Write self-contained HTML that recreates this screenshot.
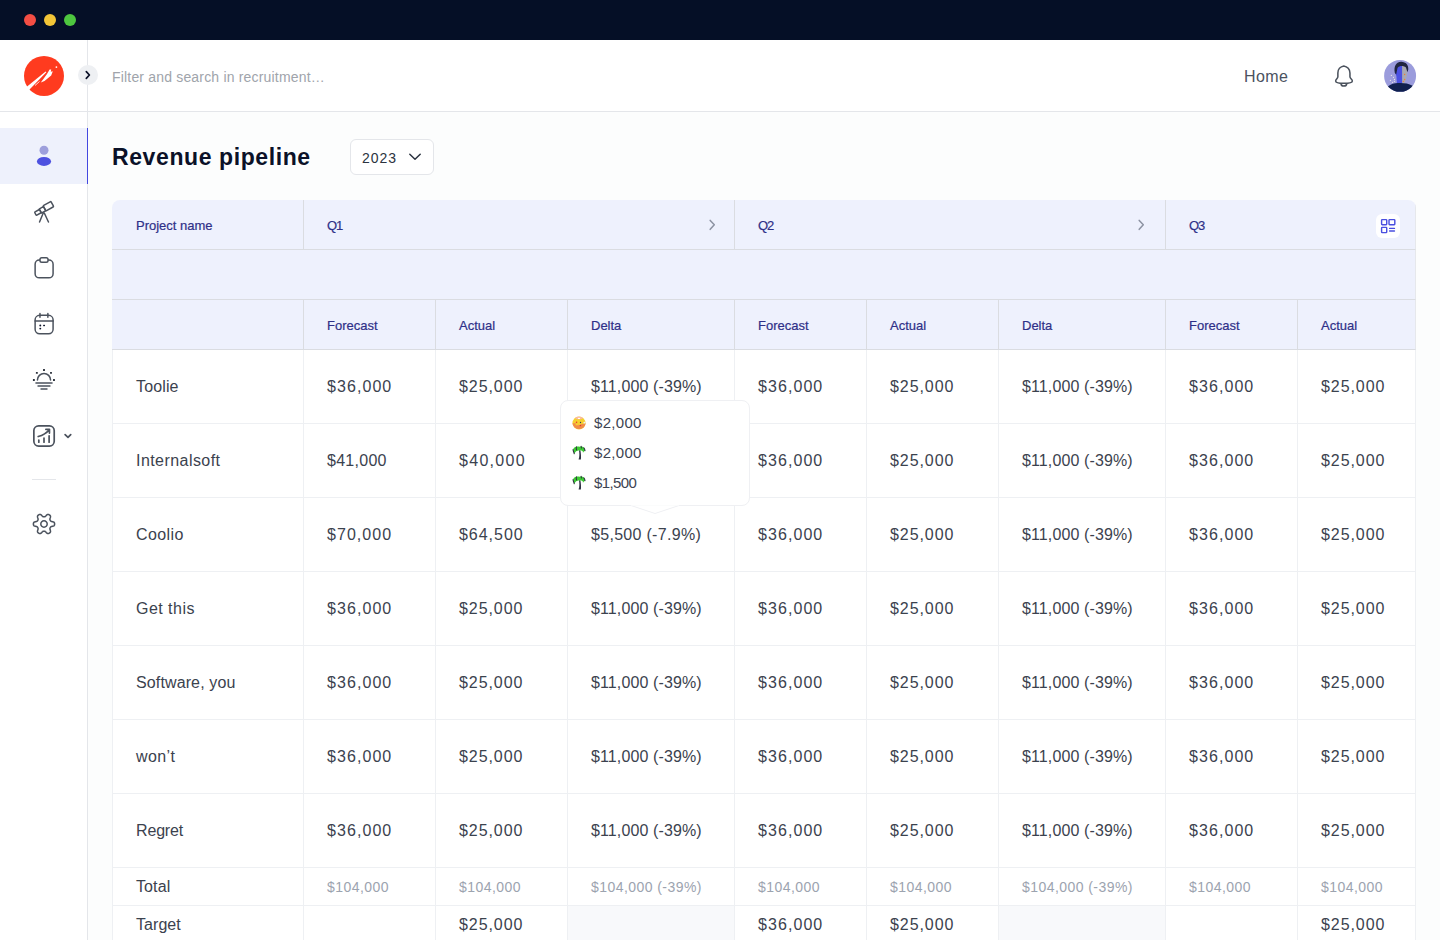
<!DOCTYPE html>
<html><head><meta charset="utf-8">
<style>
*{box-sizing:border-box;margin:0;padding:0}
html,body{width:1440px;height:940px;overflow:hidden;background:#fcfdfd;font-family:"Liberation Sans",sans-serif;position:relative}
.abs{position:absolute}
svg{position:absolute;overflow:visible}
#titlebar{left:0;top:0;width:1440px;height:40px;background:#050f26}
.dot{position:absolute;top:14px;width:12px;height:12px;border-radius:50%}
#header{left:0;top:40px;width:1440px;height:72px;background:#fff;border-bottom:1px solid #e4e6ea}
#sidebar{left:0;top:112px;width:88px;height:828px;background:#fff;border-right:1px solid #e4e6ea}
#vline{left:87px;top:40px;width:1px;height:72px;background:#e4e6ea}
#table{left:112px;top:200px;width:1304px;height:740px;overflow:hidden;border-radius:8px 8px 0 0}
.c{position:absolute;display:flex;align-items:center;padding-left:23px;white-space:nowrap}
.h{background:#eef1fd;color:#2f3088;font-size:13px;border-right:1px solid #dadce1;border-bottom:1px solid #dadce1;padding-top:2px;-webkit-text-stroke:0.2px #2f3088}
.l{border-left:1px solid #eef0f3}
.h.l{border-left:0;padding-left:24px}
.r{border-right-color:#e6e8ec}
.n{letter-spacing:0.95px}
.d{letter-spacing:0.15px}
.tn{letter-spacing:0.4px}
.td{letter-spacing:0.1px}
.tt{font-size:15px;color:#3d4452;line-height:18px}
.b{background:#fff;color:#3b424e;font-size:16px;border-right:1px solid #eef0f3;border-bottom:1px solid #eef0f3}
.t{color:#9ca3af;font-size:14px}
.g{padding-bottom:2px}
.ic{fill:none;stroke:#4b525d;stroke-linecap:round;stroke-linejoin:round}
</style></head><body>
<div id="titlebar" class="abs">
 <div class="dot" style="left:24px;background:#f44e44"></div>
 <div class="dot" style="left:44px;background:#f3c537"></div>
 <div class="dot" style="left:64px;background:#4ec73f"></div>
</div>
<div id="header" class="abs"></div>
<div id="vline" class="abs"></div>
<!-- logo -->
<svg style="left:22px;top:54px" width="44" height="44" viewBox="22 54 44 44">
 <circle cx="44" cy="75.9" r="20" fill="#ff3b1f"/>
 <path d="M24.6,88.5 L45.6,71.6 L46.3,72.3 L27.6,91.6 Z" fill="#fff"/>
 <path d="M40.8,82.4 L47,74 L49.6,69.4 L51.2,69.6 L50.8,71.8 L52.8,71.2 L51.2,75.6 L44.5,81 Z" fill="#fff"/>
 <path d="M35,85.5 L39.5,81.5" stroke="#fff" stroke-width="0.8"/>
 <circle cx="56.4" cy="67.1" r="0.9" fill="#fff"/>
</svg>
<!-- expand button -->
<div class="abs" style="left:78px;top:65px;width:20px;height:20px;border-radius:50%;background:#eef0f3"></div>
<svg style="left:78px;top:65px" width="20" height="20" viewBox="0 0 20 20"><path d="M8.3,6.6 L11.4,10 L8.3,13.4" fill="none" stroke="#0b1128" stroke-width="1.7" stroke-linecap="round" stroke-linejoin="round"/></svg>
<div class="abs" style="left:112px;top:68px;font-size:14px;color:#a0a4ab;line-height:18px;letter-spacing:0.18px">Filter and search in recruitment…</div>
<div class="abs" style="left:1244px;top:67px;font-size:16px;color:#4b5260;line-height:20px;letter-spacing:0.4px">Home</div>
<!-- bell -->
<svg style="left:1328px;top:60px" width="32" height="32" viewBox="0 0 940 940">
 <path class="ic" stroke-width="45" d="M465,175 C360,190 290,280 290,380 L290,490 C290,545 225,570 225,615 C225,660 330,685 465,685 C600,685 715,660 715,615 C715,570 645,545 645,490 L645,380 C645,280 570,190 465,175 Z M382,700 C388,785 542,785 550,700"/>
</svg>
<!-- avatar -->
<svg style="left:1382px;top:58px" width="36" height="36" viewBox="0 0 940 940">
 <defs><clipPath id="av"><circle cx="472" cy="467" r="417"/></clipPath></defs>
 <g clip-path="url(#av)">
 <rect width="940" height="940" fill="#9b9cdc"/>
 <path d="M520,180 C600,190 665,260 660,380 C655,480 630,560 600,620 L590,680 L505,680 Z" fill="#a9a9b1"/>
 <path d="M525,190 C420,200 355,280 345,380 L375,470 L390,680 L525,680 Z" fill="#4b51e2"/>
 <path d="M335,390 C300,200 380,95 500,95 C625,95 700,190 685,300 L665,370 L625,250 C565,195 455,195 405,260 L370,430 Z" fill="#1f2440"/>
 <path d="M150,745 C250,665 350,645 470,655 C600,655 700,675 800,725 L820,940 L150,940 Z" fill="#10204f"/>
 <g fill="#e6e4e8"><circle cx="245" cy="455" r="16"/><circle cx="300" cy="505" r="16"/><circle cx="325" cy="560" r="16"/><circle cx="220" cy="585" r="16"/><circle cx="325" cy="610" r="16"/><circle cx="275" cy="635" r="16"/></g>
 <g fill="#f07a3a"><circle cx="590" cy="430" r="18"/><circle cx="590" cy="560" r="18"/><circle cx="560" cy="610" r="18"/></g>
 </g>
</svg>
<div id="sidebar" class="abs"></div>
<!-- active item -->
<div class="abs" style="left:0;top:128px;width:88px;height:56px;background:#eef1fc;border-right:1px solid #4247e0"></div>
<svg style="left:30px;top:142px" width="28" height="28" viewBox="0 0 28 28">
 <circle cx="14" cy="8.3" r="4.5" fill="#9d9fdc"/>
 <ellipse cx="14" cy="19.4" rx="7.1" ry="4.5" fill="#4d51e0"/>
</svg>
<!-- telescope -->
<svg style="left:30px;top:198px" width="28" height="28" viewBox="0 0 940 940">
 <g class="ic" stroke-width="50">
 <g transform="translate(470,370) rotate(-29)">
  <rect x="-330" y="-62" width="190" height="124" rx="22"/>
  <rect x="-140" y="-80" width="165" height="160" rx="10"/>
  <rect x="25" y="-112" width="300" height="200" rx="26"/>
 </g>
 <path d="M445,505 L320,805 M480,505 L620,805"/>
 </g>
</svg>
<!-- clipboard -->
<svg style="left:30px;top:254px" width="28" height="28" viewBox="0 0 940 940">
 <g class="ic" stroke-width="50">
 <rect x="172" y="200" width="603" height="600" rx="140"/>
 <rect x="335" y="125" width="270" height="150" rx="60" fill="#fff"/>
 </g>
</svg>
<!-- calendar -->
<svg style="left:30px;top:310px" width="28" height="28" viewBox="0 0 940 940">
 <g class="ic" stroke-width="50">
 <rect x="172" y="180" width="603" height="620" rx="150"/>
 <path d="M172,370 L775,370 M335,115 L335,245 M600,115 L600,245"/>
 </g>
 <g fill="#0b1128"><circle cx="345" cy="520" r="32"/><rect x="440" y="495" width="65" height="48" rx="20"/><circle cx="345" cy="625" r="32"/></g>
</svg>
<!-- sunrise -->
<svg style="left:30px;top:366px" width="28" height="28" viewBox="0 0 940 940">
 <g class="ic" stroke-width="50">
 <path d="M250,470 A220,220 0 0 1 690,470"/>
 <path d="M200,570 L740,570 M270,670 L670,670 M370,770 L570,770"/>
 </g>
 <g fill="#2b313b"><rect x="438" y="103" width="64" height="64" rx="10"/><rect x="198" y="198" width="64" height="64" rx="10"/><rect x="673" y="198" width="64" height="64" rx="10"/><rect x="98" y="438" width="64" height="64" rx="10"/><rect x="773" y="438" width="64" height="64" rx="10"/></g>
</svg>
<!-- chart -->
<svg style="left:28px;top:420px" width="48" height="32" viewBox="0 0 1410 940">
 <g class="ic" stroke-width="50">
 <rect x="172" y="172" width="598" height="593" rx="140"/>
 <path d="M318,590 L318,650 M470,530 L470,650 M620,465 L620,650"/>
 <path d="M300,485 C430,450 540,390 625,285 M525,275 L630,275 L630,385"/>
 <path d="M1090,430 L1175,510 L1255,430"/>
 </g>
</svg>
<div class="abs" style="left:32px;top:479px;width:24px;height:1px;background:#e4e6ea"></div>
<!-- gear -->
<svg style="left:44px;top:524px" width="1" height="1" viewBox="0 0 1 1">
 <g class="ic" stroke-width="1.5">
 <path d="M10.6,0.0 L10.6,0.5 L10.5,0.9 L10.3,1.4 L10.0,1.8 L9.4,2.1 L8.6,2.3 L7.8,2.5 L7.2,2.6 L6.8,2.8 L6.6,3.1 L6.4,3.3 L6.2,3.6 L6.1,3.9 L6.0,4.2 L5.9,4.5 L5.9,4.9 L6.0,5.5 L6.3,6.3 L6.5,7.1 L6.5,7.8 L6.3,8.2 L6.0,8.6 L5.7,8.9 L5.3,9.2 L4.9,9.4 L4.4,9.5 L4.0,9.6 L3.5,9.5 L2.9,9.2 L2.3,8.6 L1.8,8.0 L1.3,7.6 L1.0,7.3 L0.6,7.2 L0.3,7.2 L0.0,7.2 L-0.3,7.2 L-0.6,7.2 L-1.0,7.3 L-1.3,7.6 L-1.8,8.0 L-2.3,8.6 L-2.9,9.2 L-3.5,9.5 L-4.0,9.6 L-4.4,9.5 L-4.9,9.4 L-5.3,9.2 L-5.7,8.9 L-6.0,8.6 L-6.3,8.2 L-6.5,7.8 L-6.5,7.1 L-6.3,6.3 L-6.0,5.5 L-5.9,4.9 L-5.9,4.5 L-6.0,4.2 L-6.1,3.9 L-6.2,3.6 L-6.4,3.3 L-6.6,3.1 L-6.8,2.8 L-7.2,2.6 L-7.8,2.5 L-8.6,2.3 L-9.4,2.1 L-10.0,1.8 L-10.3,1.4 L-10.5,0.9 L-10.6,0.5 L-10.6,0.0 L-10.6,-0.5 L-10.5,-0.9 L-10.3,-1.4 L-10.0,-1.8 L-9.4,-2.1 L-8.6,-2.3 L-7.8,-2.5 L-7.2,-2.6 L-6.8,-2.8 L-6.6,-3.1 L-6.4,-3.3 L-6.2,-3.6 L-6.1,-3.9 L-6.0,-4.2 L-5.9,-4.5 L-5.9,-4.9 L-6.0,-5.5 L-6.3,-6.3 L-6.5,-7.1 L-6.5,-7.8 L-6.3,-8.2 L-6.0,-8.6 L-5.7,-8.9 L-5.3,-9.2 L-4.9,-9.4 L-4.4,-9.5 L-4.0,-9.6 L-3.5,-9.5 L-2.9,-9.2 L-2.3,-8.6 L-1.8,-8.0 L-1.3,-7.6 L-1.0,-7.3 L-0.6,-7.2 L-0.3,-7.2 L-0.0,-7.2 L0.3,-7.2 L0.6,-7.2 L1.0,-7.3 L1.3,-7.6 L1.8,-8.0 L2.3,-8.6 L2.9,-9.2 L3.5,-9.5 L4.0,-9.6 L4.4,-9.5 L4.9,-9.4 L5.3,-9.2 L5.7,-8.9 L6.0,-8.6 L6.3,-8.2 L6.5,-7.8 L6.5,-7.1 L6.3,-6.3 L6.0,-5.5 L5.9,-4.9 L5.9,-4.5 L6.0,-4.2 L6.1,-3.9 L6.2,-3.6 L6.4,-3.3 L6.6,-3.1 L6.8,-2.8 L7.2,-2.6 L7.8,-2.5 L8.6,-2.3 L9.4,-2.1 L10.0,-1.8 L10.3,-1.4 L10.5,-0.9 L10.6,-0.5Z"/>
 <circle cx="0" cy="0" r="3.2"/>
 </g>
</svg>
<div class="abs" style="left:112px;top:142px;font-size:23px;font-weight:bold;color:#0b1128;line-height:30px;letter-spacing:0.6px">Revenue pipeline</div>
<div class="abs" style="left:350px;top:139px;width:84px;height:36px;border:1px solid #e4e6ea;border-radius:6px;background:#fff"></div>
<div class="abs" style="left:362px;top:149px;font-size:14px;color:#2b3340;line-height:18px;letter-spacing:1px">2023</div>
<svg style="left:405px;top:148px" width="20" height="20" viewBox="0 0 20 20"><path d="M4.8,6.3 L10,11.2 L15.2,6.3" fill="none" stroke="#2b3340" stroke-width="1.5" stroke-linecap="round" stroke-linejoin="round"/></svg>
<div id="table" class="abs">
<div class="c h l" style="left:0px;top:0px;width:192px;height:50px;">Project name</div>
<div class="c h" style="left:192px;top:0px;width:431px;height:50px;"><span style="letter-spacing:-1px">Q1</span></div>
<div class="c h" style="left:623px;top:0px;width:431px;height:50px;"><span style="letter-spacing:-1px">Q2</span></div>
<div class="c h r" style="left:1054px;top:0px;width:250px;height:50px;"><span style="letter-spacing:-1px">Q3</span></div>
<div class="c h l r" style="left:0px;top:50px;width:1304px;height:50px;"></div>
<div class="c h l" style="left:0px;top:100px;width:192px;height:50px;"></div>
<div class="c h" style="left:192px;top:100px;width:132px;height:50px;">Forecast</div>
<div class="c h" style="left:324px;top:100px;width:132px;height:50px;">Actual</div>
<div class="c h" style="left:456px;top:100px;width:167px;height:50px;">Delta</div>
<div class="c h" style="left:623px;top:100px;width:132px;height:50px;">Forecast</div>
<div class="c h" style="left:755px;top:100px;width:132px;height:50px;">Actual</div>
<div class="c h" style="left:887px;top:100px;width:167px;height:50px;">Delta</div>
<div class="c h" style="left:1054px;top:100px;width:132px;height:50px;">Forecast</div>
<div class="c h r" style="left:1186px;top:100px;width:118px;height:50px;">Actual</div>
<div class="c b l" style="left:0px;top:150px;width:192px;height:74px;"><span style="letter-spacing:0.14px">Toolie</span></div>
<div class="c b" style="left:192px;top:150px;width:132px;height:74px;"><span style="letter-spacing:1.07px">$36,000</span></div>
<div class="c b" style="left:324px;top:150px;width:132px;height:74px;"><span style="letter-spacing:0.93px">$25,000</span></div>
<div class="c b" style="left:456px;top:150px;width:167px;height:74px;"><span style="letter-spacing:0.12px">$11,000 (-39%)</span></div>
<div class="c b" style="left:623px;top:150px;width:132px;height:74px;"><span style="letter-spacing:1.07px">$36,000</span></div>
<div class="c b" style="left:755px;top:150px;width:132px;height:74px;"><span style="letter-spacing:0.93px">$25,000</span></div>
<div class="c b" style="left:887px;top:150px;width:167px;height:74px;"><span style="letter-spacing:0.12px">$11,000 (-39%)</span></div>
<div class="c b" style="left:1054px;top:150px;width:132px;height:74px;"><span style="letter-spacing:1.07px">$36,000</span></div>
<div class="c b" style="left:1186px;top:150px;width:118px;height:74px;"><span style="letter-spacing:0.93px">$25,000</span></div>
<div class="c b l" style="left:0px;top:224px;width:192px;height:74px;"><span style="letter-spacing:0.44px">Internalsoft</span></div>
<div class="c b" style="left:192px;top:224px;width:132px;height:74px;"><span style="letter-spacing:0.27px">$41,000</span></div>
<div class="c b" style="left:324px;top:224px;width:132px;height:74px;"><span style="letter-spacing:1.3px">$40,000</span></div>
<div class="c b" style="left:456px;top:224px;width:167px;height:74px;"></div>
<div class="c b" style="left:623px;top:224px;width:132px;height:74px;"><span style="letter-spacing:1.07px">$36,000</span></div>
<div class="c b" style="left:755px;top:224px;width:132px;height:74px;"><span style="letter-spacing:0.93px">$25,000</span></div>
<div class="c b" style="left:887px;top:224px;width:167px;height:74px;"><span style="letter-spacing:0.12px">$11,000 (-39%)</span></div>
<div class="c b" style="left:1054px;top:224px;width:132px;height:74px;"><span style="letter-spacing:1.07px">$36,000</span></div>
<div class="c b" style="left:1186px;top:224px;width:118px;height:74px;"><span style="letter-spacing:0.93px">$25,000</span></div>
<div class="c b l" style="left:0px;top:298px;width:192px;height:74px;"><span style="letter-spacing:0.4px">Coolio</span></div>
<div class="c b" style="left:192px;top:298px;width:132px;height:74px;"><span style="letter-spacing:1.05px">$70,000</span></div>
<div class="c b" style="left:324px;top:298px;width:132px;height:74px;"><span style="letter-spacing:0.97px">$64,500</span></div>
<div class="c b" style="left:456px;top:298px;width:167px;height:74px;"><span style="letter-spacing:0.3px">$5,500 (-7.9%)</span></div>
<div class="c b" style="left:623px;top:298px;width:132px;height:74px;"><span style="letter-spacing:1.07px">$36,000</span></div>
<div class="c b" style="left:755px;top:298px;width:132px;height:74px;"><span style="letter-spacing:0.93px">$25,000</span></div>
<div class="c b" style="left:887px;top:298px;width:167px;height:74px;"><span style="letter-spacing:0.12px">$11,000 (-39%)</span></div>
<div class="c b" style="left:1054px;top:298px;width:132px;height:74px;"><span style="letter-spacing:1.07px">$36,000</span></div>
<div class="c b" style="left:1186px;top:298px;width:118px;height:74px;"><span style="letter-spacing:0.93px">$25,000</span></div>
<div class="c b l" style="left:0px;top:372px;width:192px;height:74px;"><span style="letter-spacing:0.47px">Get this</span></div>
<div class="c b" style="left:192px;top:372px;width:132px;height:74px;"><span style="letter-spacing:1.07px">$36,000</span></div>
<div class="c b" style="left:324px;top:372px;width:132px;height:74px;"><span style="letter-spacing:0.93px">$25,000</span></div>
<div class="c b" style="left:456px;top:372px;width:167px;height:74px;"><span style="letter-spacing:0.12px">$11,000 (-39%)</span></div>
<div class="c b" style="left:623px;top:372px;width:132px;height:74px;"><span style="letter-spacing:1.07px">$36,000</span></div>
<div class="c b" style="left:755px;top:372px;width:132px;height:74px;"><span style="letter-spacing:0.93px">$25,000</span></div>
<div class="c b" style="left:887px;top:372px;width:167px;height:74px;"><span style="letter-spacing:0.12px">$11,000 (-39%)</span></div>
<div class="c b" style="left:1054px;top:372px;width:132px;height:74px;"><span style="letter-spacing:1.07px">$36,000</span></div>
<div class="c b" style="left:1186px;top:372px;width:118px;height:74px;"><span style="letter-spacing:0.93px">$25,000</span></div>
<div class="c b l" style="left:0px;top:446px;width:192px;height:74px;"><span style="letter-spacing:0.125px">Software, you</span></div>
<div class="c b" style="left:192px;top:446px;width:132px;height:74px;"><span style="letter-spacing:1.07px">$36,000</span></div>
<div class="c b" style="left:324px;top:446px;width:132px;height:74px;"><span style="letter-spacing:0.93px">$25,000</span></div>
<div class="c b" style="left:456px;top:446px;width:167px;height:74px;"><span style="letter-spacing:0.12px">$11,000 (-39%)</span></div>
<div class="c b" style="left:623px;top:446px;width:132px;height:74px;"><span style="letter-spacing:1.07px">$36,000</span></div>
<div class="c b" style="left:755px;top:446px;width:132px;height:74px;"><span style="letter-spacing:0.93px">$25,000</span></div>
<div class="c b" style="left:887px;top:446px;width:167px;height:74px;"><span style="letter-spacing:0.12px">$11,000 (-39%)</span></div>
<div class="c b" style="left:1054px;top:446px;width:132px;height:74px;"><span style="letter-spacing:1.07px">$36,000</span></div>
<div class="c b" style="left:1186px;top:446px;width:118px;height:74px;"><span style="letter-spacing:0.93px">$25,000</span></div>
<div class="c b l" style="left:0px;top:520px;width:192px;height:74px;"><span style="letter-spacing:0.42px">won’t</span></div>
<div class="c b" style="left:192px;top:520px;width:132px;height:74px;"><span style="letter-spacing:1.07px">$36,000</span></div>
<div class="c b" style="left:324px;top:520px;width:132px;height:74px;"><span style="letter-spacing:0.93px">$25,000</span></div>
<div class="c b" style="left:456px;top:520px;width:167px;height:74px;"><span style="letter-spacing:0.12px">$11,000 (-39%)</span></div>
<div class="c b" style="left:623px;top:520px;width:132px;height:74px;"><span style="letter-spacing:1.07px">$36,000</span></div>
<div class="c b" style="left:755px;top:520px;width:132px;height:74px;"><span style="letter-spacing:0.93px">$25,000</span></div>
<div class="c b" style="left:887px;top:520px;width:167px;height:74px;"><span style="letter-spacing:0.12px">$11,000 (-39%)</span></div>
<div class="c b" style="left:1054px;top:520px;width:132px;height:74px;"><span style="letter-spacing:1.07px">$36,000</span></div>
<div class="c b" style="left:1186px;top:520px;width:118px;height:74px;"><span style="letter-spacing:0.93px">$25,000</span></div>
<div class="c b l" style="left:0px;top:594px;width:192px;height:74px;"><span style="letter-spacing:-0.16px">Regret</span></div>
<div class="c b" style="left:192px;top:594px;width:132px;height:74px;"><span style="letter-spacing:1.07px">$36,000</span></div>
<div class="c b" style="left:324px;top:594px;width:132px;height:74px;"><span style="letter-spacing:0.93px">$25,000</span></div>
<div class="c b" style="left:456px;top:594px;width:167px;height:74px;"><span style="letter-spacing:0.12px">$11,000 (-39%)</span></div>
<div class="c b" style="left:623px;top:594px;width:132px;height:74px;"><span style="letter-spacing:1.07px">$36,000</span></div>
<div class="c b" style="left:755px;top:594px;width:132px;height:74px;"><span style="letter-spacing:0.93px">$25,000</span></div>
<div class="c b" style="left:887px;top:594px;width:167px;height:74px;"><span style="letter-spacing:0.12px">$11,000 (-39%)</span></div>
<div class="c b" style="left:1054px;top:594px;width:132px;height:74px;"><span style="letter-spacing:1.07px">$36,000</span></div>
<div class="c b" style="left:1186px;top:594px;width:118px;height:74px;"><span style="letter-spacing:0.93px">$25,000</span></div>
<div class="c b l" style="left:0px;top:668px;width:192px;height:38px;"><span style="letter-spacing:0.1px">Total</span></div>
<div class="c b t" style="left:192px;top:668px;width:132px;height:38px;"><span style="letter-spacing:0.44px">$104,000</span></div>
<div class="c b t" style="left:324px;top:668px;width:132px;height:38px;"><span style="letter-spacing:0.44px">$104,000</span></div>
<div class="c b t" style="left:456px;top:668px;width:167px;height:38px;"><span style="letter-spacing:0.44px">$104,000 (-39%)</span></div>
<div class="c b t" style="left:623px;top:668px;width:132px;height:38px;"><span style="letter-spacing:0.44px">$104,000</span></div>
<div class="c b t" style="left:755px;top:668px;width:132px;height:38px;"><span style="letter-spacing:0.44px">$104,000</span></div>
<div class="c b t" style="left:887px;top:668px;width:167px;height:38px;"><span style="letter-spacing:0.44px">$104,000 (-39%)</span></div>
<div class="c b t" style="left:1054px;top:668px;width:132px;height:38px;"><span style="letter-spacing:0.44px">$104,000</span></div>
<div class="c b t" style="left:1186px;top:668px;width:118px;height:38px;"><span style="letter-spacing:0.44px">$104,000</span></div>
<div class="c b l g" style="left:0px;top:706px;width:192px;height:40px;"><span style="letter-spacing:0.06px">Target</span></div>
<div class="c b g" style="left:192px;top:706px;width:132px;height:40px;"></div>
<div class="c b g" style="left:324px;top:706px;width:132px;height:40px;"><span style="letter-spacing:0.93px">$25,000</span></div>
<div class="c b g" style="left:456px;top:706px;width:167px;height:40px;background:#f8f9fb;"></div>
<div class="c b g" style="left:623px;top:706px;width:132px;height:40px;"><span style="letter-spacing:1.07px">$36,000</span></div>
<div class="c b g" style="left:755px;top:706px;width:132px;height:40px;"><span style="letter-spacing:0.93px">$25,000</span></div>
<div class="c b g" style="left:887px;top:706px;width:167px;height:40px;background:#f8f9fb;"></div>
<div class="c b g" style="left:1054px;top:706px;width:132px;height:40px;"></div>
<div class="c b g" style="left:1186px;top:706px;width:118px;height:40px;"><span style="letter-spacing:0.93px">$25,000</span></div>
<!-- header chevrons -->
<svg style="left:588px;top:12px" width="24" height="24" viewBox="0 0 940 940"><path d="M400,330 L560,500 L400,680" fill="none" stroke="#8d93a3" stroke-width="60" stroke-linecap="round" stroke-linejoin="round"/></svg>
<svg style="left:1017px;top:12px" width="24" height="24" viewBox="0 0 940 940"><path d="M400,330 L560,500 L400,680" fill="none" stroke="#8d93a3" stroke-width="60" stroke-linecap="round" stroke-linejoin="round"/></svg>
<!-- grid icon -->
<div class="abs" style="left:1264px;top:14px;width:24px;height:24px;border-radius:6px;background:#fff"></div>
<svg style="left:1260px;top:10px" width="32" height="32" viewBox="0 0 940 940">
 <g fill="none" stroke="#4a4fe0" stroke-width="42" stroke-linejoin="round">
  <rect x="282" y="282" width="150" height="150" rx="18"/>
  <rect x="500" y="282" width="170" height="150" rx="18"/>
  <rect x="282" y="510" width="150" height="155" rx="18"/>
 </g>
 <path d="M518,540 L660,540 M518,615 L660,615" stroke="#4a4fe0" stroke-width="42" stroke-linecap="round"/>
</svg>
</div>
<!-- tooltip -->
<div class="abs" style="left:560px;top:400px;width:190px;height:106px;background:#fff;border:1px solid #eff0f3;border-radius:8px"></div>
<svg style="left:630px;top:504px" width="50" height="12" viewBox="0 0 50 12"><path d="M1,1.5 L25,9.5 L49,1.5" fill="#fff" stroke="#eff0f3" stroke-width="1"/><rect x="1" y="0" width="48" height="1.5" fill="#fff"/></svg>
<svg style="left:568px;top:412px" width="24" height="24" viewBox="0 0 940 940">
 <circle cx="430" cy="430" r="255" fill="#f5d02e"/>
 <path d="M178,440 C190,540 250,620 330,650 C420,690 560,670 630,590 C670,540 690,480 685,430 L640,450 C600,470 540,480 500,470 L500,520 L420,520 L400,470 L300,440 Z" fill="#f08d48"/>
 <path d="M300,440 L400,470 L420,520 L300,520 Z" fill="#f5d02e"/>
 <path d="M350,555 L560,555 L560,595 L350,595 Z" fill="#f08d48"/>
 <path d="M270,235 C330,165 530,165 590,235 C530,300 330,300 270,235 Z" fill="#f9b9a2"/>
 <ellipse cx="430" cy="250" rx="45" ry="25" fill="#fff"/>
 <circle cx="335" cy="405" r="30" fill="#e8342f"/><circle cx="485" cy="530" r="32" fill="#e8342f"/><circle cx="490" cy="410" r="26" fill="#2d3a5a"/>
 <circle cx="640" cy="420" r="35" fill="#e8f0fa"/>
</svg>
<svg style="left:568px;top:442px" width="24" height="24" viewBox="0 0 940 940">
 <path d="M430,320 C450,450 455,560 415,690 L505,690 C520,560 505,440 485,320 Z" fill="#2e3242"/>
 <path d="M450,190 C350,150 230,190 195,300 C215,340 235,400 245,460 C285,380 340,330 455,320 C560,320 600,360 585,420 C610,380 640,360 665,340 C660,210 560,150 450,190 Z" fill="#3dcc33"/>
 <path d="M195,300 C210,360 230,410 245,460 M665,340 C660,300 650,260 620,230 M330,190 C320,230 320,270 335,310 M515,165 L525,235" stroke="#2e3242" stroke-width="42" fill="none" stroke-linecap="round"/>
</svg>
<svg style="left:568px;top:472px" width="24" height="24" viewBox="0 0 940 940">
 <path d="M430,320 C450,450 455,560 415,690 L505,690 C520,560 505,440 485,320 Z" fill="#2e3242"/>
 <path d="M450,190 C350,150 230,190 195,300 C215,340 235,400 245,460 C285,380 340,330 455,320 C560,320 600,360 585,420 C610,380 640,360 665,340 C660,210 560,150 450,190 Z" fill="#3dcc33"/>
 <path d="M195,300 C210,360 230,410 245,460 M665,340 C660,300 650,260 620,230 M330,190 C320,230 320,270 335,310 M515,165 L525,235" stroke="#2e3242" stroke-width="42" fill="none" stroke-linecap="round"/>
</svg>
<div class="abs tt" style="left:594px;top:414px;letter-spacing:0.3px">$2,000</div>
<div class="abs tt" style="left:594px;top:444px;letter-spacing:0.3px">$2,000</div>
<div class="abs tt" style="left:594px;top:474px;letter-spacing:-0.6px">$1,500</div>
</body></html>
